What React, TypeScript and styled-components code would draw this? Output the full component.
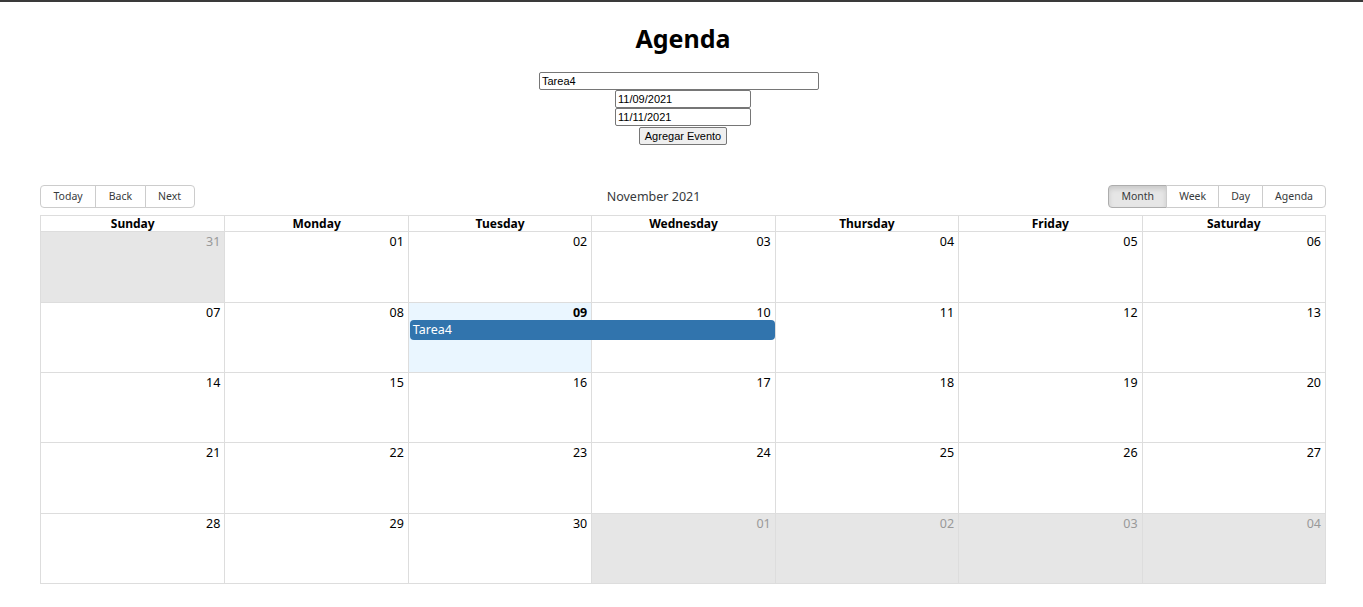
import React from "react";
import styled, { createGlobalStyle, css } from "styled-components";

const Global = createGlobalStyle`
  html, body { margin: 0; padding: 0; background: #fff; }
  body { font-family: "Noto Sans", "Open Sans", sans-serif; color: #373a3c; }
  * { box-sizing: border-box; }
`;

const Page = styled.div`
  border-top: 2px solid #3a3a3a;
  padding: 0 37px 0 40px;
`;

const Title = styled.h1`
  margin: 19px 0 16px;
  font-family: "Noto Sans", "Open Sans", sans-serif;
  font-size: 25px;
  line-height: 35px;
  font-weight: 700;
  color: #000;
  text-align: center;
`;

const Form = styled.div`
  display: flex;
  flex-direction: column;
  align-items: center;
`;

const Input = styled.input<{ $w: number; $shift?: number }>`
  width: ${(p) => p.$w}px;
  height: 18px;
  margin: 0 ${(p) => p.$shift ?? 0}px 0 0;
  padding: 1px 2px;
  border: 1px solid #767676;
  border-radius: 2px;
  font-family: "Liberation Sans", Arial, sans-serif;
  font-size: 11px;
  color: #000;
  background: #fff;
`;

const SubmitButton = styled.button`
  margin-top: 1px;
  height: 18px;
  padding: 0 5px;
  border: 1px solid #767676;
  border-radius: 2px;
  background: #efefef;
  font-family: "Liberation Sans", Arial, sans-serif;
  font-size: 11px;
  color: #000;
`;

const Calendar = styled.div`
  margin-top: 40px;
  width: 1286px;
`;

const Toolbar = styled.div`
  display: flex;
  align-items: center;
  height: 23px;
  margin-bottom: 7px;
`;

const Group = styled.div<{ $pad: number }>`
  display: flex;
  & > button { padding: 0 ${(p) => p.$pad}px; }
`;

const ToolButton = styled.button<{ $active?: boolean }>`
  height: 23px;
  border: 1px solid #ccc;
  margin-left: -1px;
  background: ${(p) => (p.$active ? "#e6e6e6" : "#fff")};
  color: #373a3c;
  font-family: "Noto Sans", "Open Sans", sans-serif;
  font-size: 10.5px;
  line-height: 21px;
  &:first-child { margin-left: 0; border-radius: 4px 0 0 4px; }
  &:last-child { border-radius: 0 4px 4px 0; }
  ${(p) =>
    p.$active &&
    css`
      box-shadow: inset 0 3px 5px rgba(0, 0, 0, 0.125);
      border-color: #adadad;
    `}
`;

const Label = styled.span`
  flex: 1;
  text-align: center;
  font-size: 12.5px;
  color: #373a3c;
  padding-left: 4px;
`;

const Month = styled.div`
  border: 1px solid #ddd;
  display: flex;
  flex-direction: column;
`;

const HeaderRow = styled.div`
  display: grid;
  grid-template-columns: repeat(7, 1fr);
  border-bottom: 1px solid #ddd;
`;

const HeaderCell = styled.div`
  height: 15px;
  text-align: center;
  font-weight: 700;
  font-size: 12px;
  line-height: 16px;
  color: #000;
  & + & { border-left: 1px solid #ddd; }
`;

const Week = styled.div`
  display: grid;
  grid-template-columns: repeat(7, 1fr);
  grid-template-rows: 17px 20px 1fr;
  height: 70px;
  & + & { border-top: 1px solid #ddd; }
  &:nth-child(5) { height: 71px; }
`;

const BgCell = styled.div<{ $col: number; $off?: boolean; $today?: boolean }>`
  grid-column: ${(p) => p.$col};
  grid-row: 1 / -1;
  background: ${(p) => (p.$off ? "#e6e6e6" : p.$today ? "#eaf6ff" : "#fff")};
  border-left: ${(p) => (p.$col > 1 ? "1px solid #ddd" : "none")};
`;

const DateNum = styled.div<{ $col: number; $off?: boolean; $now?: boolean }>`
  grid-column: ${(p) => p.$col};
  grid-row: 1;
  text-align: right;
  padding-right: 4px;
  font-size: 12.5px;
  line-height: 17px;
  padding-top: 1px;
  color: ${(p) => (p.$off ? "#999" : "#000")};
  font-weight: ${(p) => (p.$now ? 700 : 400)};
  z-index: 1;
`;

const Event = styled.div<{ $from: number; $to: number }>`
  grid-column: ${(p) => p.$from} / ${(p) => p.$to};
  grid-row: 2;
  margin: 0 0 0 2px;
  background: #3174ad;
  color: #fff;
  border-radius: 4px;
  padding: 0 3px;
  font-size: 12.5px;
  line-height: 20px;
  z-index: 1;
`;

const days = ["Sunday", "Monday", "Tuesday", "Wednesday", "Thursday", "Friday", "Saturday"];

type Cell = { n: string; off?: boolean; today?: boolean };

const pad = (n: number) => (n < 10 ? "0" + n : "" + n);

const weeks: Cell[][] = (() => {
  const all: Cell[] = [{ n: "31", off: true }];
  for (let d = 1; d <= 30; d++) all.push({ n: pad(d), today: d === 9 });
  for (let d = 1; d <= 4; d++) all.push({ n: pad(d), off: true });
  const out: Cell[][] = [];
  for (let i = 0; i < all.length; i += 7) out.push(all.slice(i, i + 7));
  return out;
})();

export default function App() {
  return (
    <>
      <Global />
      <Page>
        <Title>Agenda</Title>
        <Form>
          <Input $w={280} $shift={8} defaultValue="Tarea4" />
          <Input $w={136} defaultValue="11/09/2021" />
          <Input $w={136} defaultValue="11/11/2021" />
          <SubmitButton>Agregar Evento</SubmitButton>
        </Form>
        <Calendar>
          <Toolbar>
            <Group $pad={12.5}>
              <ToolButton>Today</ToolButton>
              <ToolButton>Back</ToolButton>
              <ToolButton>Next</ToolButton>
            </Group>
            <Label>November 2021</Label>
            <Group $pad={12}>
              <ToolButton $active>Month</ToolButton>
              <ToolButton>Week</ToolButton>
              <ToolButton>Day</ToolButton>
              <ToolButton>Agenda</ToolButton>
            </Group>
          </Toolbar>
          <Month>
            <HeaderRow>
              {days.map((d) => (
                <HeaderCell key={d}>{d}</HeaderCell>
              ))}
            </HeaderRow>
            {weeks.map((w, wi) => (
              <Week key={wi}>
                {w.map((c, ci) => (
                  <BgCell key={"b" + ci} $col={ci + 1} $off={c.off} $today={c.today} />
                ))}
                {w.map((c, ci) => (
                  <DateNum key={"d" + ci} $col={ci + 1} $off={c.off} $now={c.today}>
                    {c.n}
                  </DateNum>
                ))}
                {wi === 1 && (
                  <Event $from={3} $to={5}>
                    Tarea4
                  </Event>
                )}
              </Week>
            ))}
          </Month>
        </Calendar>
      </Page>
    </>
  );
}
